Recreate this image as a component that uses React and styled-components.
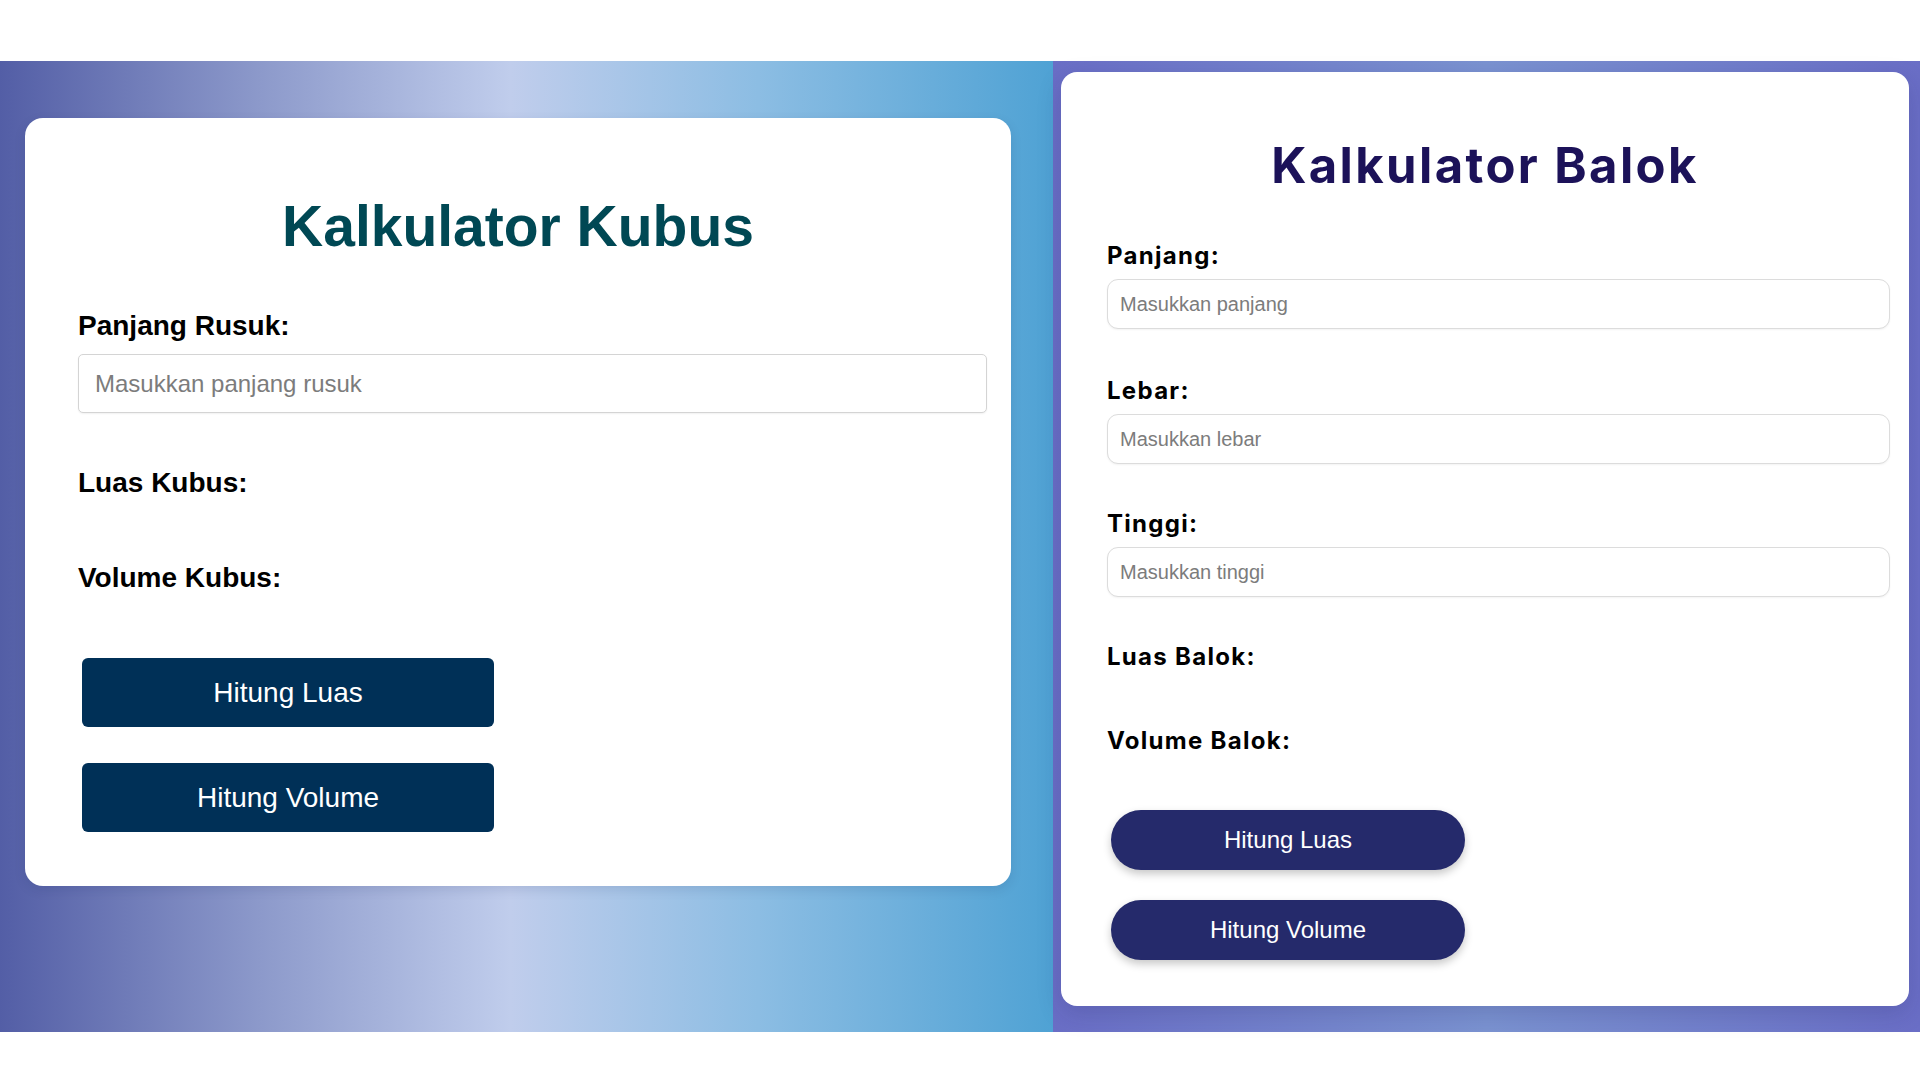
import React from 'react'
import styled, { createGlobalStyle } from 'styled-components'

const GlobalStyle = createGlobalStyle`
  html, body {
    margin: 0;
    padding: 0;
    background: #ffffff;
  }
  * {
    box-sizing: border-box;
  }
`

const Page = styled.div`
  width: 1920px;
  height: 1080px;
  padding-top: 61px;
  background: #ffffff;
`
const Band = styled.div`
  display: flex;
  height: 971px;
`

// kubus side
const KubusPanel = styled.section`
  width: 1053px;
  padding: 57px 0 0 25px;
  background: linear-gradient(to right, #535ea6 0%, #8d9acb 25%, #c0cdec 48.5%, #8cbde3 72%, #4fa2d4 100%);
`
const KubusCard = styled.div`
  display: flex;
  flex-direction: column;
  align-items: flex-start;
  width: 986px;
  padding: 80px 53px 54px;
  background: #ffffff;
  border-radius: 18px;
  box-shadow: 0 4px 12px rgba(20, 30, 80, 0.12);
  font-family: 'Liberation Sans', Arial, sans-serif;
`
const KubusTitle = styled.h1`
  align-self: stretch;
  margin: 0 0 57px;
  font-size: 57px;
  line-height: 1;
  font-weight: 700;
  text-align: center;
  color: #004854;
`
const KubusLabel = styled.div`
  margin: ${p => p.$mt || 0}px 0 0;
  font-size: 28px;
  line-height: 1;
  font-weight: 700;
  color: #000000;
`
const KubusInput = styled.input`
  width: 909px;
  height: 59px;
  margin: 14px 0 0;
  padding: 0 16px;
  border: 1px solid #d4d4d4;
  border-radius: 5px;
  box-shadow: 0 1px 2px rgba(0, 0, 0, 0.06);
  font-family: 'Liberation Sans', Arial, sans-serif;
  font-size: 24px;
  color: #333;
  outline: none;
  &::placeholder {
    color: #7c7c7c;
  }
`
const KubusButton = styled.button`
  width: 412px;
  height: 69px;
  margin: ${p => p.$mt}px 0 0 4px;
  border: none;
  border-radius: 6px;
  background: #003057;
  color: #ffffff;
  font-family: 'Liberation Sans', Arial, sans-serif;
  font-size: 28px;
  cursor: pointer;
`

// balok side
const BalokPanel = styled.section`
  width: 867px;
  padding: 11px 11px 0 8px;
  background: linear-gradient(to right, #6a6ec6 0%, #7b93d1 50%, #6a6ec6 100%);
`
const BalokCard = styled.div`
  display: flex;
  flex-direction: column;
  align-items: flex-start;
  width: 848px;
  padding: 69px 46px 46px;
  background: #ffffff;
  border-radius: 16px;
  box-shadow: 0 8px 24px rgba(30, 30, 90, 0.18);
  font-family: Inter, 'Noto Sans', sans-serif;
`
const BalokTitle = styled.h1`
  align-self: stretch;
  margin: 0 0 54px;
  font-size: 49px;
  line-height: 1;
  font-weight: 700;
  letter-spacing: 2.4px;
  text-align: center;
  color: #1c1259;
`
const BalokLabel = styled.div`
  margin: ${p => p.$mt || 0}px 0 0;
  font-size: 24px;
  line-height: 1;
  font-weight: 700;
  letter-spacing: 1.3px;
  color: #000000;
`
const BalokInput = styled.input`
  width: 783px;
  height: 50px;
  margin: 11px 0 0;
  padding: 0 12px;
  border: 1px solid #dcdcdc;
  border-radius: 11px;
  box-shadow: 0 1px 2px rgba(0, 0, 0, 0.05);
  font-family: 'Liberation Sans', Arial, sans-serif;
  font-size: 20px;
  color: #333;
  outline: none;
  &::placeholder {
    color: #7c7c7c;
  }
`
const BalokButton = styled.button`
  width: 354px;
  height: 60px;
  margin: ${p => p.$mt}px 0 0 4px;
  border: none;
  border-radius: 30px;
  background: #252a6b;
  color: #ffffff;
  font-family: 'Liberation Sans', Arial, sans-serif;
  font-size: 24px;
  box-shadow: 0 4px 8px rgba(0, 0, 0, 0.22);
  cursor: pointer;
`

const balokFields = [
  { key: 'panjang', label: 'Panjang:', placeholder: 'Masukkan panjang', mt: 0 },
  { key: 'lebar', label: 'Lebar:', placeholder: 'Masukkan lebar', mt: 50 },
  { key: 'tinggi', label: 'Tinggi:', placeholder: 'Masukkan tinggi', mt: 48 },
]

export default function App() {
  return (
    <>
      <GlobalStyle />
      <Page>
        <Band>
          <KubusPanel>
            <KubusCard>
              <KubusTitle>Kalkulator Kubus</KubusTitle>
              <KubusLabel>Panjang Rusuk:</KubusLabel>
              <KubusInput type="number" placeholder="Masukkan panjang rusuk" />
              <KubusLabel $mt={56}>Luas Kubus:</KubusLabel>
              <KubusLabel $mt={67}>Volume Kubus:</KubusLabel>
              <KubusButton $mt={66}>Hitung Luas</KubusButton>
              <KubusButton $mt={36}>Hitung Volume</KubusButton>
            </KubusCard>
          </KubusPanel>
          <BalokPanel>
            <BalokCard>
              <BalokTitle>Kalkulator Balok</BalokTitle>
              {balokFields.map(f => (
                <React.Fragment key={f.key}>
                  <BalokLabel $mt={f.mt}>{f.label}</BalokLabel>
                  <BalokInput type="number" placeholder={f.placeholder} />
                </React.Fragment>
              ))}
              <BalokLabel $mt={48}>Luas Balok:</BalokLabel>
              <BalokLabel $mt={60}>Volume Balok:</BalokLabel>
              <BalokButton $mt={57}>Hitung Luas</BalokButton>
              <BalokButton $mt={30}>Hitung Volume</BalokButton>
            </BalokCard>
          </BalokPanel>
        </Band>
      </Page>
    </>
  )
}
